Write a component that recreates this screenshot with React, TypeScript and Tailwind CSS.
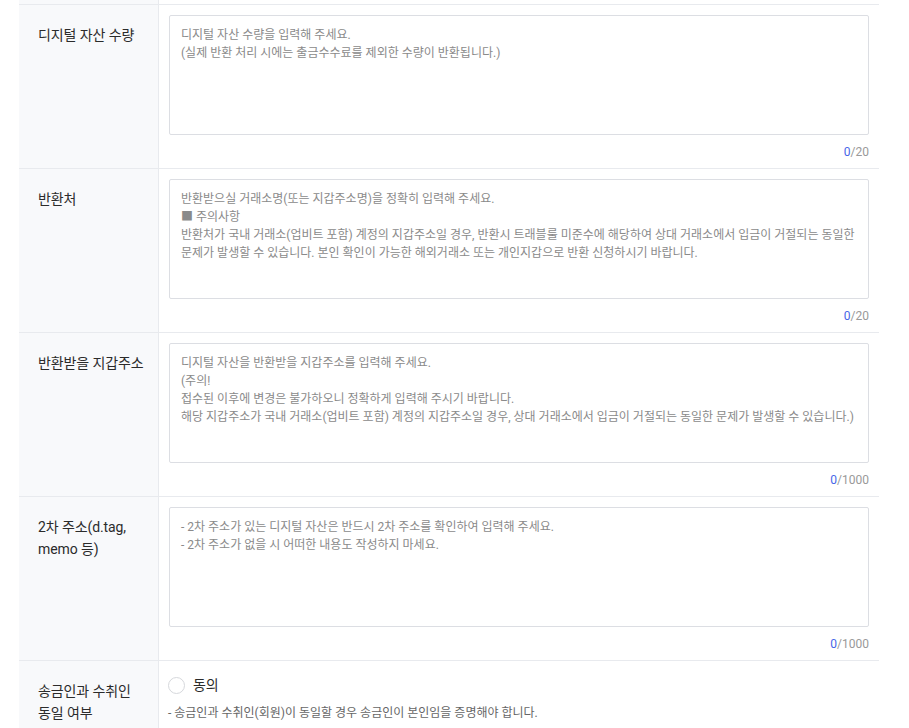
const FONT = "font-['Roboto','Noto_Sans_CJK_KR',sans-serif]";

type Row = {
  label: string[];
  lines: string[];
  max: number;
};

const ROWS: Row[] = [
  {
    label: ["디지털 자산 수량"],
    lines: ["디지털 자산 수량을 입력해 주세요.", "(실제 반환 처리 시에는 출금수수료를 제외한 수량이 반환됩니다.)"],
    max: 20,
  },
  {
    label: ["반환처"],
    lines: [
      "반환받으실 거래소명(또는 지갑주소명)을 정확히 입력해 주세요.",
      "■ 주의사항",
      "반환처가 국내 거래소(업비트 포함) 계정의 지갑주소일 경우, 반환시 트래블룰 미준수에 해당하여 상대 거래소에서 입금이 거절되는 동일한",
      "문제가 발생할 수 있습니다. 본인 확인이 가능한 해외거래소 또는 개인지갑으로 반환 신청하시기 바랍니다.",
    ],
    max: 20,
  },
  {
    label: ["반환받을 지갑주소"],
    lines: [
      "디지털 자산을 반환받을 지갑주소를 입력해 주세요.",
      "(주의!",
      "접수된 이후에 변경은 불가하오니 정확하게 입력해 주시기 바랍니다.",
      "해당 지갑주소가 국내 거래소(업비트 포함) 계정의 지갑주소일 경우, 상대 거래소에서 입금이 거절되는 동일한 문제가 발생할 수 있습니다.)",
    ],
    max: 1000,
  },
  {
    label: ["2차 주소(d.tag,", "memo 등)"],
    lines: ["- 2차 주소가 있는 디지털 자산은 반드시 2차 주소를 확인하여 입력해 주세요.", "- 2차 주소가 없을 시 어떠한 내용도 작성하지 마세요."],
    max: 1000,
  },
];

function Label({ lines }: { lines: string[] }) {
  return (
    <div className="w-[140px] shrink-0 border-r border-[#e8eaee] bg-[#f8f9fb] pl-[19px] pt-[19px]">
      {lines.map((l) => (
        <div key={l} className="whitespace-nowrap text-[14px] leading-[22px] tracking-[-0.1px] text-[#2b2b2b]">
          {l}
        </div>
      ))}
    </div>
  );
}

function TextRow({ row }: { row: Row }) {
  return (
    <div className="flex border-b border-[#e8eaee]">
      <Label lines={row.label} />
      <div className="flex-1 px-[10px] pt-[10px] pb-[7px]">
        <div className="h-[120px] rounded-[2px] border border-[#dcdee3] bg-white pl-[11px] pt-[10px]">
          {row.lines.map((l) => (
            <div key={l} className="whitespace-nowrap text-[12px] leading-[18px] text-[#8a8a8a]">
              {l}
            </div>
          ))}
        </div>
        <div className="mt-2 text-right text-[12px] leading-[18px] text-[#999]">
          <span className="text-[#4766e8]">0</span>/{row.max}
        </div>
      </div>
    </div>
  );
}

export default function App() {
  return (
    <div className={`${FONT} min-h-[728px] bg-white`}>
      <div className="ml-[19px] w-[860px]">
        <div className="flex h-[5px] border-b border-[#e8eaee]">
          <div className="w-[140px] border-r border-[#e8eaee] bg-[#f8f9fb]" />
        </div>
        {ROWS.map((r) => (
          <TextRow key={r.label[0]} row={r} />
        ))}
        <div className="flex">
          <Label lines={["송금인과 수취인", "동일 여부"]} />
          <div className="flex-1 px-[9px] pt-[15px] pb-[10px]">
            <label className="flex items-center gap-[8px]">
              <span className="h-[17px] w-[17px] rounded-full border border-[#d6d8dc] bg-white" />
              <span className="text-[14px] leading-[18px] tracking-[-0.1px] text-[#2b2b2b]">동의</span>
            </label>
            <div className="mt-[10px] whitespace-nowrap text-[12px] leading-[18px] text-[#666]">
              - 송금인과 수취인(회원)이 동일할 경우 송금인이 본인임을 증명해야 합니다.
            </div>
          </div>
        </div>
      </div>
    </div>
  );
}
